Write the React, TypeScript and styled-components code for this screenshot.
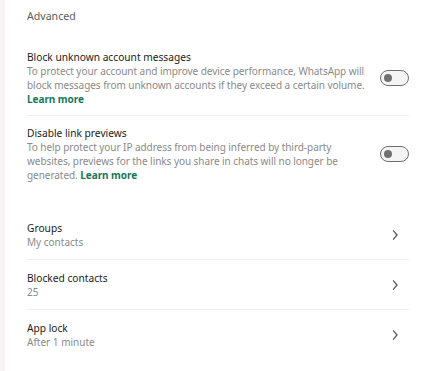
import styled, { createGlobalStyle } from 'styled-components';

const GlobalStyle = createGlobalStyle`
  html, body {
    margin: 0;
    padding: 0;
    background: #f5f3f3;
  }
  body {
    font-family: 'Noto Sans', 'Open Sans', sans-serif;
    -webkit-font-smoothing: antialiased;
  }
`;

const toggleItems = [
  {
    title: 'Block unknown account messages',
    lines: [
      'To protect your account and improve device performance, WhatsApp will',
      'block messages from unknown accounts if they exceed a certain volume.',
    ],
    linkInline: false,
  },
  {
    title: 'Disable link previews',
    lines: [
      'To help protect your IP address from being inferred by third-party',
      'websites, previews for the links you share in chats will no longer be',
      'generated.',
    ],
    linkInline: true,
  },
];

const linkItems = [
  { title: 'Groups', value: 'My contacts' },
  { title: 'Blocked contacts', value: '25' },
  { title: 'App lock', value: 'After 1 minute' },
];

const Chevron = () => (
  <svg width="8" height="12" viewBox="0 0 8 12" fill="none">
    <path d="M2.5 1.8 L6 6 L2.5 10.2" stroke="#5a5a5a" strokeWidth="1.3" strokeLinecap="round" strokeLinejoin="round" />
  </svg>
);

const App = () => {
  return (
    <>
      <GlobalStyle />
      <Panel>
        <Heading>Advanced</Heading>
        <Section>
          {toggleItems.map((item, i) => (
            <ToggleRow key={item.title} $last={i === toggleItems.length - 1}>
              <TextBlock>
                <Title>{item.title}</Title>
                <Description>
                  {item.lines.map((line, j) => (
                    <Line key={j}>
                      {line}
                      {item.linkInline && j === item.lines.length - 1 && (
                        <>
                          {' '}
                          <Link>Learn more</Link>
                        </>
                      )}
                    </Line>
                  ))}
                  {!item.linkInline && (
                    <Line>
                      <Link>Learn more</Link>
                    </Line>
                  )}
                </Description>
              </TextBlock>
              <Toggle>
                <Knob />
              </Toggle>
            </ToggleRow>
          ))}
        </Section>
        <List>
          {linkItems.map((item, i) => (
            <ListRow key={item.title} $last={i === linkItems.length - 1}>
              <TextBlock>
                <Title>{item.title}</Title>
                <Value>{item.value}</Value>
              </TextBlock>
              <ChevronBox>
                <Chevron />
              </ChevronBox>
            </ListRow>
          ))}
        </List>
      </Panel>
    </>
  );
};

export default App;

const Panel = styled.div`
  margin-left: 5px;
  height: 371px;
  background: #ffffff;
  padding: 9px 15px 0 22px;
  box-sizing: border-box;
  overflow: hidden;
`;

const Heading = styled.div`
  font-size: 10.6px;
  line-height: 14px;
  color: #5c5c5c;
  margin-bottom: 27px;
`;

const Section = styled.div`
  display: flex;
  flex-direction: column;
`;

const ToggleRow = styled.div<{ $last: boolean }>`
  display: flex;
  align-items: center;
  justify-content: space-between;
  padding: ${({ $last }) => ($last ? '10px 0 0' : '0 0 9px')};
  border-bottom: ${({ $last }) => ($last ? 'none' : '1px solid #efefef')};
`;

const TextBlock = styled.div`
  display: flex;
  flex-direction: column;
`;

const Title = styled.div`
  font-size: 10.2px;
  line-height: 14px;
  color: #1b1b1b;
`;

const Description = styled.div`
  font-size: 10px;
  line-height: 14px;
  color: #8a8a8a;
  letter-spacing: -0.05px;
`;

const Line = styled.div`
  white-space: nowrap;
`;

const Link = styled.span`
  color: #17775a;
  font-weight: 700;
`;

const Toggle = styled.div`
  box-sizing: border-box;
  width: 29px;
  height: 16px;
  border: 1.5px solid #707070;
  border-radius: 9px;
  background: #f4f4f4;
  display: flex;
  align-items: center;
  padding: 0 3px;
  flex-shrink: 0;
`;

const Knob = styled.div`
  width: 8px;
  height: 8px;
  border-radius: 50%;
  background: #707070;
`;

const List = styled.div`
  display: flex;
  flex-direction: column;
  margin-top: 39px;
`;

const ListRow = styled.div<{ $last: boolean }>`
  display: flex;
  align-items: center;
  justify-content: space-between;
  padding: 0 0 10px;
  margin-bottom: 11px;
  border-bottom: ${({ $last }) => ($last ? 'none' : '1px solid #efefef')};
`;

const Value = styled.div`
  font-size: 10px;
  line-height: 14px;
  color: #8a8a8a;
`;

const ChevronBox = styled.div`
  display: flex;
  align-items: center;
  margin-right: 10px;
`;
